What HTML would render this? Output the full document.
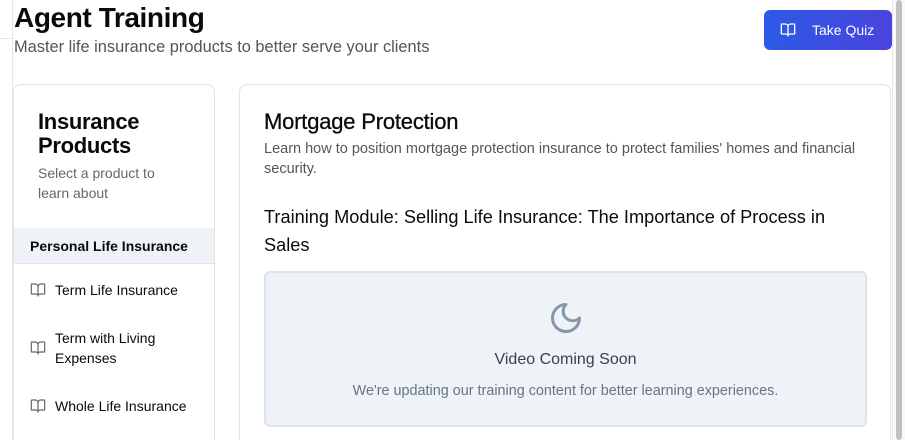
<!DOCTYPE html>
<html><head><style>
*{box-sizing:border-box;margin:0;padding:0}
html,body{width:905px;height:440px;overflow:hidden}
body{background:#fff;font-family:"Liberation Sans",sans-serif;position:relative;color:#0a0a0a}
.vl{position:absolute;left:12px;top:0;width:1px;height:440px;background:#e5e5e5}
.hl{position:absolute;left:0;top:38px;width:12px;height:1px;background:#e5e5e5}
.sb{position:absolute;right:0;top:0;width:13px;height:440px;background:#fafafa;border-left:1px solid #e8e8e8}
.sb i{position:absolute;left:3px;top:0;width:6px;height:440px;background:#c1c1c1;border-radius:3px}
h1{position:absolute;left:14px;top:2px;font-size:28px;font-weight:bold;letter-spacing:-0.4px}
.sub{position:absolute;left:14px;top:38px;font-size:16.4px;color:#555}
.btn{position:absolute;left:764px;top:10px;width:128px;height:40px;border-radius:6px;background:linear-gradient(90deg,#2c5ae6,#4a43dd);color:#fff;font-size:14px}
.btn span{position:absolute;left:48px;top:12px}
.card{position:absolute;border:1px solid #e3e3e3;border-radius:8px;background:#fff}
.left{left:13px;top:84px;width:202px;height:370px}
.right{left:239px;top:84px;width:652px;height:370px}
.lt{position:absolute;left:24px;top:25px;font-size:22px;font-weight:bold;line-height:24px;letter-spacing:-0.3px}
.ls{position:absolute;left:24px;top:78px;font-size:14px;color:#666;line-height:20px}
.cat{position:absolute;left:0;top:143px;width:200px;height:36px;background:#eff3f7;border-bottom:1px solid #e3e3e3;font-size:14px;font-weight:bold;padding:10px 0 0 16px}
.it{position:absolute;left:16px;font-size:14px;line-height:20px}
.it svg{position:absolute;left:0}
.it span{position:absolute;left:25px;white-space:nowrap}
.rt{position:absolute;left:24px;top:24px;font-size:22px;letter-spacing:-0.2px;-webkit-text-stroke:0.3px #0a0a0a}
.rs{position:absolute;left:24px;top:54px;font-size:14.5px;color:#555;line-height:20px;width:620px}
.mt{position:absolute;left:24px;top:118px;font-size:18.2px;line-height:28px;width:600px}
.vid{position:absolute;left:24px;top:186px;width:603px;height:156px;background:#eff3f7;border:2px solid #dbe3ec;border-radius:6px;text-align:center}
.vid .a{position:absolute;top:78px;width:100%;font-size:16px;color:#334155}
.vid .b{position:absolute;top:110px;width:100%;font-size:14.4px;color:#64748b}
</style></head><body>
<div class="vl"></div><div class="hl"></div>
<h1>Agent Training</h1>
<div class="sub">Master life insurance products to better serve your clients</div>
<div class="btn"><svg style="position:absolute;left:16px;top:12px" width="16" height="16" viewBox="0 0 24 24" fill="none" stroke="#fff" stroke-width="2" stroke-linecap="round" stroke-linejoin="round"><path d="M12 7v14M3 18a1 1 0 0 1-1-1V4a1 1 0 0 1 1-1h5a4 4 0 0 1 4 4 4 4 0 0 1 4-4h5a1 1 0 0 1 1 1v13a1 1 0 0 1-1 1h-6a3 3 0 0 0-3 3 3 3 0 0 0-3-3z"/></svg><span>Take Quiz</span></div>
<div class="card left">
<div class="lt">Insurance<br>Products</div>
<div class="ls">Select a product to<br>learn about</div>
<div class="cat">Personal Life Insurance</div>
<div class="it" style="top:195px"><svg style="top:2px" width="16" height="16" viewBox="0 0 24 24" fill="none" stroke="#666" stroke-width="1.8" stroke-linejoin="round"><path d="M12 7v14M3 18a1 1 0 0 1-1-1V4a1 1 0 0 1 1-1h5a4 4 0 0 1 4 4 4 4 0 0 1 4-4h5a1 1 0 0 1 1 1v13a1 1 0 0 1-1 1h-6a3 3 0 0 0-3 3 3 3 0 0 0-3-3z"/></svg><span>Term Life Insurance</span></div>
<div class="it" style="top:243px"><svg style="top:12px" width="16" height="16" viewBox="0 0 24 24" fill="none" stroke="#666" stroke-width="1.8" stroke-linejoin="round"><path d="M12 7v14M3 18a1 1 0 0 1-1-1V4a1 1 0 0 1 1-1h5a4 4 0 0 1 4 4 4 4 0 0 1 4-4h5a1 1 0 0 1 1 1v13a1 1 0 0 1-1 1h-6a3 3 0 0 0-3 3 3 3 0 0 0-3-3z"/></svg><span>Term with Living<br>Expenses</span></div>
<div class="it" style="top:311px"><svg style="top:2px" width="16" height="16" viewBox="0 0 24 24" fill="none" stroke="#666" stroke-width="1.8" stroke-linejoin="round"><path d="M12 7v14M3 18a1 1 0 0 1-1-1V4a1 1 0 0 1 1-1h5a4 4 0 0 1 4 4 4 4 0 0 1 4-4h5a1 1 0 0 1 1 1v13a1 1 0 0 1-1 1h-6a3 3 0 0 0-3 3 3 3 0 0 0-3-3z"/></svg><span>Whole Life Insurance</span></div>
</div>
<div class="card right">
<div class="rt">Mortgage Protection</div>
<div class="rs">Learn how to position mortgage protection insurance to protect families' homes and financial security.</div>
<div class="mt">Training Module: Selling Life Insurance: The Importance of Process in Sales</div>
<div class="vid">
<svg style="position:absolute;left:282px;top:27px" width="36" height="36" viewBox="0 0 24 24" fill="none" stroke="#8496ad" stroke-width="2" stroke-linecap="round" stroke-linejoin="round"><path d="M12 3a6 6 0 0 0 9 9 9 9 0 1 1-9-9Z"/></svg>
<div class="a">Video Coming Soon</div>
<div class="b">We're updating our training content for better learning experiences.</div>
</div>
</div>
<div class="sb"><i></i></div>
</body></html>
